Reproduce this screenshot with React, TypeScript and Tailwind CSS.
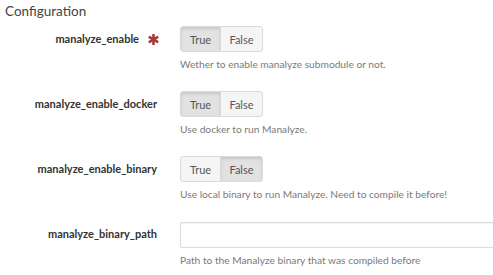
import { useState } from 'react';

type BoolField = {
  name: string;
  help: string;
  value: boolean;
  required?: boolean;
};

const fields: BoolField[] = [
  { name: 'manalyze_enable', help: 'Wether to enable manalyze submodule or not.', value: true, required: true },
  { name: 'manalyze_enable_docker', help: 'Use docker to run Manalyze.', value: true },
  { name: 'manalyze_enable_binary', help: 'Use local binary to run Manalyze. Need to compile it before!', value: false },
];

function RequiredMark() {
  return (
    <svg viewBox="0 0 10 10" className="w-[11px] h-[11px] ml-[9px] -mr-[2px] shrink-0" aria-hidden>
      <g fill="#a33b36" transform="translate(5 5)">
        <rect x="-1.2" y="-5" width="2.4" height="10" rx="0.4" />
        <rect x="-1.2" y="-5" width="2.4" height="10" rx="0.4" transform="rotate(60)" />
        <rect x="-1.2" y="-5" width="2.4" height="10" rx="0.4" transform="rotate(-60)" />
      </g>
    </svg>
  );
}

function Toggle({ initial }: { initial: boolean }) {
  const [on, setOn] = useState(initial);
  const base = 'h-[26px] text-[11px] text-[#555] border border-[#dadada] leading-none';
  const active = 'bg-[#e2e2e2] shadow-[inset_0_2px_3px_rgba(0,0,0,0.12)]';
  const idle = 'bg-[#f5f5f5]';
  return (
    <div className="flex">
      <button onClick={() => setOn(true)} className={`${base} rounded-l-[3px] w-[41px] ${on ? active : idle}`}>
        True
      </button>
      <button onClick={() => setOn(false)} className={`${base} -ml-px rounded-r-[3px] w-[43px] ${!on ? active : idle}`}>
        False
      </button>
    </div>
  );
}

function Row({ label, required, help, children }: { label: string; required?: boolean; help: string; children: React.ReactNode }) {
  return (
    <div className="flex items-start mb-[20px]">
      <div className="w-[157px] h-[26px] flex items-center justify-end shrink-0 text-[11px] font-bold text-[#333]">
        {label}
        {required && <RequiredMark />}
      </div>
      <div className="ml-[23px] flex-1 min-w-0">
        {children}
        <p className="mt-[5px] text-[10.2px] leading-[14px] text-[#7a7a7a] whitespace-nowrap">{help}</p>
      </div>
    </div>
  );
}

export default function App() {
  return (
    <div className="w-[493px] h-[275px] overflow-hidden bg-white" style={{ fontFamily: 'Lato, "Open Sans", sans-serif' }}>
      <h2 className="pl-[5px] text-[13.5px] leading-[22px] text-[#444] font-normal mb-[4px]">Configuration</h2>
      {fields.map(f => (
        <Row key={f.name} label={f.name} required={f.required} help={f.help}>
          <Toggle initial={f.value} />
        </Row>
      ))}
      <Row label="manalyze_binary_path" help="Path to the Manalyze binary that was compiled before">
        <input
          type="text"
          className="w-[340px] h-[26px] border border-[#dcdcdc] rounded-[2px] shadow-[inset_0_1px_2px_rgba(0,0,0,0.06)] outline-none px-2 text-[11px]"
        />
      </Row>
    </div>
  );
}
